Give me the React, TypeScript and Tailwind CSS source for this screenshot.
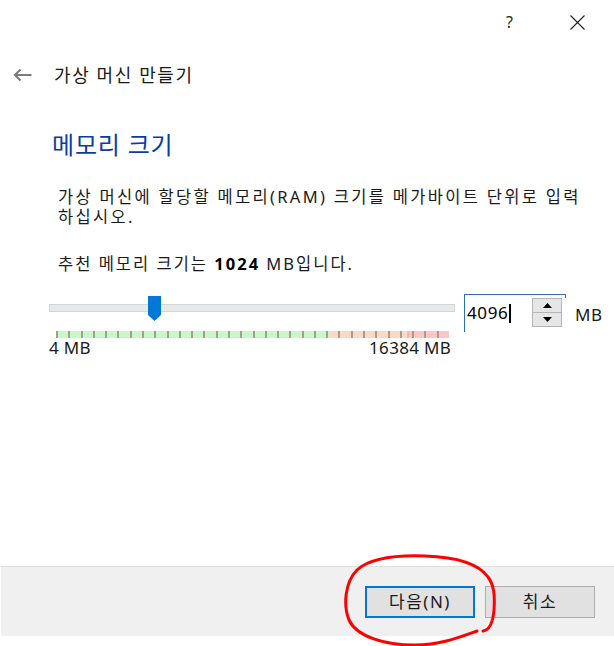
import React from 'react'

const TICKS = Array.from({ length: 32 }, (_, i) => i)

const SpinBox = () => {
  return (
    <div className="relative ml-[9px] flex h-[38px] w-[101px] items-start border-l border-t border-[#2f6ea6]">
      <div className="absolute right-[-1px] top-[-1px] h-[4px] border-r border-[#2f6ea6]" />
      <div className="mt-[6px] flex h-[24px] items-center pl-[2px] text-[17px] tracking-[0.6px] text-black">
        4096
        <span className="ml-[1px] inline-block h-[19px] w-[2px] bg-black" />
      </div>
      {/* up / down buttons */}
      <div className="ml-auto mr-[3px] mt-[3px] flex h-[29px] w-[30px] flex-col border border-[#b5b5b5] bg-[#e6e6e6]">
        <div className="flex h-[14px] items-center justify-center border-b border-[#b5b5b5]">
          <svg width="9" height="5" viewBox="0 0 9 5">
            <path d="M4.5 0 L9 5 H0 Z" fill="#000" />
          </svg>
        </div>
        <div className="flex flex-1 items-center justify-center">
          <svg width="9" height="5" viewBox="0 0 9 5">
            <path d="M0 0 H9 L4.5 5 Z" fill="#000" />
          </svg>
        </div>
      </div>
    </div>
  )
}

const MemorySlider = () => {
  return (
    <div className="relative ml-[49px] h-[38px] w-[406px] pt-[10px]">
      <div className="h-[8px] w-full border border-[#d3d6d6] bg-[#e7eaea]" />
      <div className="ml-[7px] mt-[19px] grid h-[7px] w-[393px] grid-cols-[repeat(32,1fr)] bg-[linear-gradient(to_right,#c6f9c6_0px,#c6f9c6_273px,#ffd8c4_273px,#ffd8c4_351px,#ffb4b4_351px,#ffb4b4_353px,#ffc4c4_353px)]">
        {TICKS.map((i) => (
          <div key={i} className="h-full w-[2px] bg-[#a39f8f]" />
        ))}
      </div>
      {/* thumb */}
      <svg className="absolute left-[99px] top-[2px]" width="13" height="25" viewBox="0 0 13 25">
        <path d="M0 0 H13 V19 L6.5 25 L0 19 Z" fill="#0078d7" />
      </svg>
    </div>
  )
}

export default function App() {
  return (
    <div className="relative flex h-[646px] w-[614px] flex-col bg-white font-['Noto_Sans','Noto_Sans_CJK_KR',sans-serif] text-[#1a1a1a]">
      {/* window buttons */}
      <div className="flex h-[44px] items-center justify-end">
        <span className="mr-[57px] text-[16px] text-[#222]">?</span>
        <svg className="mr-[29px]" width="15" height="15" viewBox="0 0 15 15">
          <path d="M0.5 0.5 L14.5 14.5 M14.5 0.5 L0.5 14.5" stroke="#222" strokeWidth="1.1" />
        </svg>
      </div>

      {/* title */}
      <div className="mt-[19px] flex h-[24px] items-center">
        <svg className="ml-[13px]" width="19" height="14" viewBox="0 0 19 14">
          <path d="M18.5 7 H2 M7.5 1.5 L2 7 L7.5 12.5" stroke="#7a7a7a" strokeWidth="2.2" fill="none" />
        </svg>
        <span className="ml-[22px] text-[18px] tracking-[1.6px] text-[#1a1a1a]">가상 머신 만들기</span>
      </div>

      {/* heading */}
      <div className="ml-[52px] mt-[41px] flex h-[34px] items-center text-[24px] tracking-[0.8px] text-[#0b3d9e]">
        메모리 크기
      </div>

      <div className="ml-[58px] mt-[25px] flex flex-col text-[16.5px] tracking-[2.3px]">
        <div className="flex h-[20px] items-center leading-[18px]">가상 머신에 할당할 메모리(RAM) 크기를 메가바이트 단위로 입력</div>
        <div className="flex h-[20px] items-center leading-[18px]">하십시오.</div>
      </div>

      <div className="ml-[58px] mt-[27px] flex h-[20px] items-center text-[16.5px] tracking-[2px]">
        추천 메모리 크기는&nbsp;<b className="font-bold text-black">1024</b>&nbsp;MB입니다.
      </div>

      {/* slider + spin box */}
      <div className="mt-[20px] flex h-[38px] items-start">
        <MemorySlider />
        <SpinBox />
        <span className="ml-[10px] mt-[8px] text-[17px] tracking-[0.5px]">MB</span>
      </div>

      <div className="ml-[49px] mt-[8px] flex h-[16px] w-[402px] items-center justify-between text-[17px] tracking-[0.3px]">
        <span>4 MB</span>
        <span>16384 MB</span>
      </div>

      {/* footer */}
      <div className="mb-[10px] ml-[1px] mt-auto flex h-[70px] items-center justify-end gap-[10px] border-t border-[#dfdfdf] bg-[#f0f0f0] pr-[19px]">
        <button className="flex h-[32px] w-[110px] items-center justify-center border-2 border-[#0078d7] bg-[#e1e1e1] text-[17px] tracking-[1.5px]">
          다음(N)
        </button>
        <button className="flex h-[32px] w-[110px] items-center justify-center border border-[#adadad] bg-[#e1e1e1] text-[17px] tracking-[1.5px]">
          취소
        </button>
      </div>

      {/* red annotation */}
      <svg className="pointer-events-none absolute left-0 top-0" width="614" height="646" viewBox="0 0 614 646">
        <path
          d="M483 631 C490 630 493 622 494 610 C495 595 494 585 488 577 C478 563 455 557 425 556 C395 555 370 558 357 570 C345 582 343 605 349 620 C357 637 385 645 415 645 C440 645 460 637 477 631"
          stroke="#f00"
          strokeWidth="3"
          fill="none"
          strokeLinecap="round"
        />
      </svg>
    </div>
  )
}
